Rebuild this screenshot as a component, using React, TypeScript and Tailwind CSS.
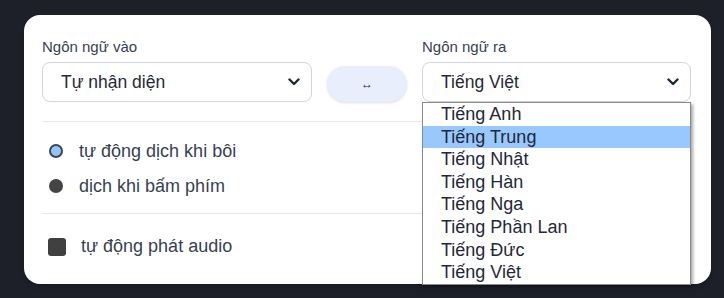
import { useState } from "react";

const languages = [
  "Tiếng Anh",
  "Tiếng Trung",
  "Tiếng Nhật",
  "Tiếng Hàn",
  "Tiếng Nga",
  "Tiếng Phần Lan",
  "Tiếng Đức",
  "Tiếng Việt",
];

function Chevron() {
  return (
    <svg width="12" height="8" viewBox="0 0 12 8" className="shrink-0">
      <path d="M1.5 1.5 L6 6 L10.5 1.5" fill="none" stroke="#1f2937" strokeWidth="2.4" strokeLinecap="round" strokeLinejoin="round" />
    </svg>
  );
}

function SelectBox({ value }: { value: string }) {
  return (
    <div className="h-10 rounded-lg border border-gray-300 bg-white flex items-center justify-between pl-[18px] pr-[11px] text-[17.5px] text-[#1f2937]">
      <span>{value}</span>
      <Chevron />
    </div>
  );
}

export default function App() {
  const [hovered] = useState(1);

  return (
    <div
      className="w-[724px] h-[298px] bg-[#1d2029] pt-[15px] pl-6 overflow-hidden"
      style={{ fontFamily: '"Liberation Sans", Arial, sans-serif' }}
    >
      <div className="relative w-[687px] h-[269px] bg-white rounded-2xl pt-[22px] pl-[18px] pr-5 shadow-md">
        <div className="flex items-end gap-[15px]">
          <div className="w-[270px]">
            <div className="text-[15px] leading-5 text-[#374151] mb-[5px]">Ngôn ngữ vào</div>
            <SelectBox value="Tự nhận diện" />
          </div>
          <button className="w-20 h-9 rounded-full bg-[#e8eefc] text-[#1f2937] text-[12px] flex items-center justify-center shadow-sm">
            ↔
          </button>
          <div className="w-[269px]">
            <div className="text-[15px] leading-5 text-[#374151] mb-[5px]">Ngôn ngữ ra</div>
            <SelectBox value="Tiếng Việt" />
          </div>
        </div>

        <div className="border-t border-gray-200 mt-[19px]" />

        <div className="pt-[18px] flex flex-col gap-[13px] text-[18px] text-[#374151]">
          <label className="flex items-center h-[22px]">
            <span className="ml-[7px] w-[14px] h-[14px] rounded-full bg-[#93c5fd] border-2 border-[#3f4653]" />
            <span className="ml-[16px]">tự động dịch khi bôi</span>
          </label>
          <label className="flex items-center h-[22px]">
            <span className="ml-[7px] w-[14px] h-[14px] rounded-full bg-[#444444]" />
            <span className="ml-[16px]">dịch khi bấm phím</span>
          </label>
        </div>

        <div className="border-t border-gray-200 mt-[16px]" />

        <label className="flex items-center mt-[19px] text-[18px] text-[#374151]">
          <span className="ml-[6px] w-[18px] h-[18px] rounded-[3px] bg-[#404040]" />
          <span className="ml-[15px]">tự động phát audio</span>
        </label>

        <ul className="absolute left-[398px] top-[87px] w-[269px] bg-white border border-[#8a8a8a] shadow-[2px_2px_3px_rgba(0,0,0,0.35)] py-0 text-[18px] text-[#1f2937]">
          {languages.map((lang, i) => (
            <li
              key={lang}
              className={`h-[22.6px] leading-[22.6px] pl-[18px] ${i === hovered ? "bg-[#99c8ff]" : ""}`}
            >
              {lang}
            </li>
          ))}
        </ul>
      </div>
    </div>
  );
}
